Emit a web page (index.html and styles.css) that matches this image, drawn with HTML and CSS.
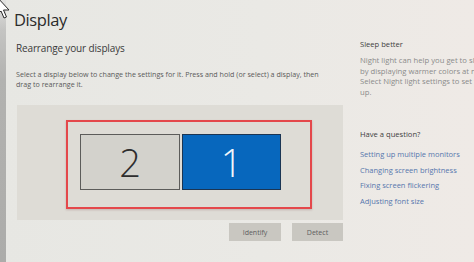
FILE: index.html
```html
<!DOCTYPE html>
<html lang="en">
<head>
<meta charset="utf-8">
<title>Display</title>
<link rel="stylesheet" href="styles.css">
</head>
<body>
<div class="page">
  <div class="strip"></div>
  <main class="main">
    <h1 class="title">Display</h1>
    <h2 class="subtitle">Rearrange your displays</h2>
    <p class="desc">Select a display below to change the settings for it. Press and hold (or select) a display, then<br>drag to rearrange it.</p>
    <div class="arrange">
      <div class="mark">
        <div class="tile tile-2">2</div>
        <div class="tile tile-1">1</div>
      </div>
    </div>
    <div class="buttons">
      <button class="btn btn-identify">Identify</button>
      <button class="btn btn-detect">Detect</button>
    </div>
  </main>
  <aside class="side">
    <h3 class="side-title">Sleep better</h3>
    <p class="side-text">Night light can help you get to sleep<br>by displaying warmer colors at night.<br>Select Night light settings to set things<br>up.</p>
    <h3 class="side-title question">Have a question?</h3>
    <a class="link" href="#">Setting up multiple monitors</a>
    <a class="link" href="#">Changing screen brightness</a>
    <a class="link" href="#">Fixing screen flickering</a>
    <a class="link" href="#">Adjusting font size</a>
  </aside>
</div>
<svg class="cursor" width="16" height="20" viewBox="0 0 16 20">
  <path d="M-3 -3 L-3 15 L1 11 L4 18 L6.5 17 L3.5 10 L9 10 Z" fill="#ffffff" stroke="#2a2a2a" stroke-width="1" stroke-linejoin="round"/>
</svg>
</body>
</html>
```

FILE: styles.css
```css
html, body {
  margin: 0;
  padding: 0;
}
body {
  width: 474px;
  height: 262px;
  overflow: hidden;
  position: relative;
  background: linear-gradient(90deg, #e7e7e3 0%, #eae9e5 55%, #efeae6 100%);
  font-family: "Open Sans", "Noto Sans", sans-serif;
  color: #333;
}
.page {
  display: flex;
  height: 262px;
}
.strip {
  width: 6px;
  flex: none;
  background: linear-gradient(180deg, #e2e2e0 0px, #c4c4c2 30px, #b2b2b0 80px, #acacaa 100%);
}
.main {
  width: 329px;
  flex: none;
  padding-left: 8px;
  display: flex;
  flex-direction: column;
}
.title {
  margin: 8px 0 0 0;
  font-size: 16.5px;
  line-height: 24px;
  font-weight: 400;
  color: #2b2b2b;
  letter-spacing: -0.4px;
}
.subtitle {
  margin: 8px 0 0 2px;
  font-size: 10px;
  line-height: 16px;
  font-weight: 400;
  color: #3a3a3a;
  letter-spacing: -0.15px;
}
.desc {
  margin: 13px 0 0 2px;
  font-size: 7.15px;
  line-height: 10px;
  color: #5a5a5a;
  white-space: nowrap;
}
.arrange {
  margin: 16px 0 0 3px;
  height: 115px;
  width: 326px;
  background: #dedcd6;
  padding: 15px 0 0 49px;
  box-sizing: border-box;
}
.mark {
  display: inline-flex;
  gap: 2px;
  border: 2px solid #e4484b;
  padding: 12px 29px 17px 12px;
  box-shadow: 0 1px 2px rgba(120, 60, 60, 0.25);
}
.tile {
  height: 56px;
  box-sizing: border-box;
  display: flex;
  align-items: center;
  justify-content: center;
  font-size: 38px;
  font-weight: 300;
  line-height: 1;
}
.tile-2 {
  width: 100px;
  background: #d3d2cc;
  border: 1px solid #5c5c5a;
  color: #2e2e2e;
}
.tile-1 {
  width: 99px;
  background: #0767bd;
  border: 1px solid #1b3553;
  color: #f2f6fb;
}
.buttons {
  display: flex;
  justify-content: flex-end;
  gap: 11px;
  width: 329px;
  margin-top: 3px;
}
.btn {
  height: 18px;
  border: none;
  background: #c9c7c1;
  color: #5e5e5e;
  font-family: "Open Sans", "Noto Sans", sans-serif;
  font-size: 7px;
  padding: 0;
}
.btn-identify { width: 52px; }
.btn-detect { width: 51px; }
.side {
  margin-left: 17px;
  display: flex;
  flex-direction: column;
  white-space: nowrap;
}
.side-title {
  margin: 39px 0 0 0;
  font-size: 7.6px;
  line-height: 11px;
  font-weight: 400;
  color: #3e3e3e;
}
.side-text {
  margin: 5px 0 0 0;
  font-size: 7.7px;
  line-height: 10.5px;
  color: #8b8b8b;
}
.question {
  margin-top: 32px;
}
.link {
  display: block;
  margin-top: 4.7px;
  font-size: 7.5px;
  line-height: 11px;
  color: #5677ad;
  text-decoration: none;
}
.question + .link {
  margin-top: 9px;
}
.cursor {
  position: absolute;
  left: 0;
  top: 0;
  overflow: visible;
}
```
